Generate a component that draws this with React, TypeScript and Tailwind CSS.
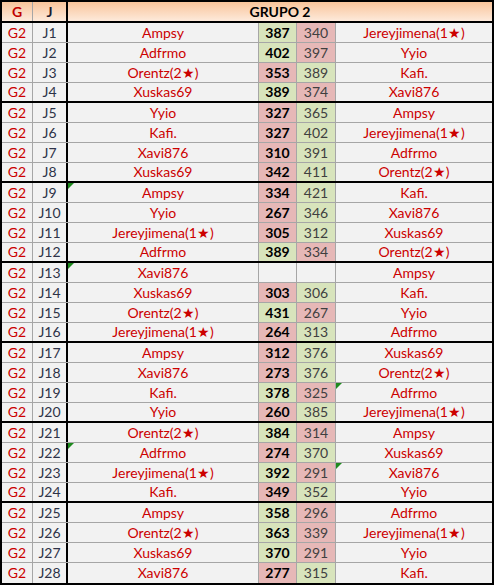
const rounds: [string, string, number | null, number | null, string][] = [
  ["J1", "Ampsy", 387, 340, "Jereyjimena(1★)"],
  ["J2", "Adfrmo", 402, 397, "Yyio"],
  ["J3", "Orentz(2★)", 353, 389, "Kafi."],
  ["J4", "Xuskas69", 389, 374, "Xavi876"],
  ["J5", "Yyio", 327, 365, "Ampsy"],
  ["J6", "Kafi.", 327, 402, "Jereyjimena(1★)"],
  ["J7", "Xavi876", 310, 391, "Adfrmo"],
  ["J8", "Xuskas69", 342, 411, "Orentz(2★)"],
  ["J9", "Ampsy", 334, 421, "Kafi."],
  ["J10", "Yyio", 267, 346, "Xavi876"],
  ["J11", "Jereyjimena(1★)", 305, 312, "Xuskas69"],
  ["J12", "Adfrmo", 389, 334, "Orentz(2★)"],
  ["J13", "Xavi876", null, null, "Ampsy"],
  ["J14", "Xuskas69", 303, 306, "Kafi."],
  ["J15", "Orentz(2★)", 431, 267, "Yyio"],
  ["J16", "Jereyjimena(1★)", 264, 313, "Adfrmo"],
  ["J17", "Ampsy", 312, 376, "Xuskas69"],
  ["J18", "Xavi876", 273, 376, "Orentz(2★)"],
  ["J19", "Kafi.", 378, 325, "Adfrmo"],
  ["J20", "Yyio", 260, 385, "Jereyjimena(1★)"],
  ["J21", "Orentz(2★)", 384, 314, "Ampsy"],
  ["J22", "Adfrmo", 274, 370, "Xuskas69"],
  ["J23", "Jereyjimena(1★)", 392, 291, "Xavi876"],
  ["J24", "Kafi.", 349, 352, "Yyio"],
  ["J25", "Ampsy", 358, 296, "Adfrmo"],
  ["J26", "Orentz(2★)", 363, 339, "Jereyjimena(1★)"],
  ["J27", "Xuskas69", 370, 291, "Yyio"],
  ["J28", "Xavi876", 277, 315, "Kafi."],
];

// little green "error" corners, like Excel draws them
const flagLeft = ["J9", "J13", "J22"];
const flagRight = ["J19", "J23"];

const Flag = () => (
  <span className="absolute left-0 top-0 w-0 h-0 border-t-[6px] border-r-[6px] border-t-[#1e8a1e] border-r-transparent" />
);

const scoreBg = (a: number | null, b: number | null) => {
  if (a === null || b === null) return "bg-[#f2f2f2]";
  return a > b ? "bg-[#d8e4bc]" : "bg-[#e6b8b7]";
};

export default function App() {
  return (
    <div className="bg-white w-[497px] h-[586px] font-['Lato','Liberation_Sans',sans-serif] text-[14px] leading-none">
      <div className="w-[494px] border-2 border-black bg-[#f2f2f2]">
        {/* header */}
        <div className="flex h-[21px] border-b-2 border-black bg-gradient-to-b from-[#f8c49a] to-[#fdeadb] font-bold">
          <div className="w-[31px] border-r border-[#a6a6a6] flex items-center justify-center text-[#c00000]">G</div>
          <div className="w-[35px] border-r-2 border-black flex items-center justify-center text-[#1a1a2e]">J</div>
          <div className="flex-1 flex items-center justify-center text-black">GRUPO 2</div>
        </div>

        {rounds.map(([j, p1, s1, s2, p2], i) => {
          const last = i === rounds.length - 1;
          const groupEnd = i % 4 === 3 && !last;
          const rowBorder = last
            ? "h-[20px]"
            : groupEnd
            ? "h-[20px] border-b-2 border-black"
            : "h-[20px] border-b border-[#a6a6a6]";
          return (
            <div key={j} className={`flex ${rowBorder}`}>
              <div className="w-[31px] border-r border-[#a6a6a6] flex items-center justify-center text-[#cc0000]">G2</div>
              <div className="w-[35px] border-r-2 border-black flex items-center justify-center text-[#2e3348]">{j}</div>
              <div className="relative w-[191px] border-r border-[#a6a6a6] flex items-center justify-center text-[#cc0000]">
                {flagLeft.includes(j) && <Flag />}
                {p1}
              </div>
              <div className={`w-[38px] border-r border-[#a6a6a6] flex items-center justify-center font-bold text-black ${scoreBg(s1, s2)}`}>
                {s1 ?? ""}
              </div>
              <div className={`w-[39px] border-r border-[#a6a6a6] flex items-center justify-center text-[#3f3f3f] ${scoreBg(s2, s1)}`}>
                {s2 ?? ""}
              </div>
              <div className="relative flex-1 flex items-center justify-center text-[#cc0000]">
                {flagRight.includes(j) && <Flag />}
                {p2}
              </div>
            </div>
          );
        })}
      </div>
    </div>
  );
}
